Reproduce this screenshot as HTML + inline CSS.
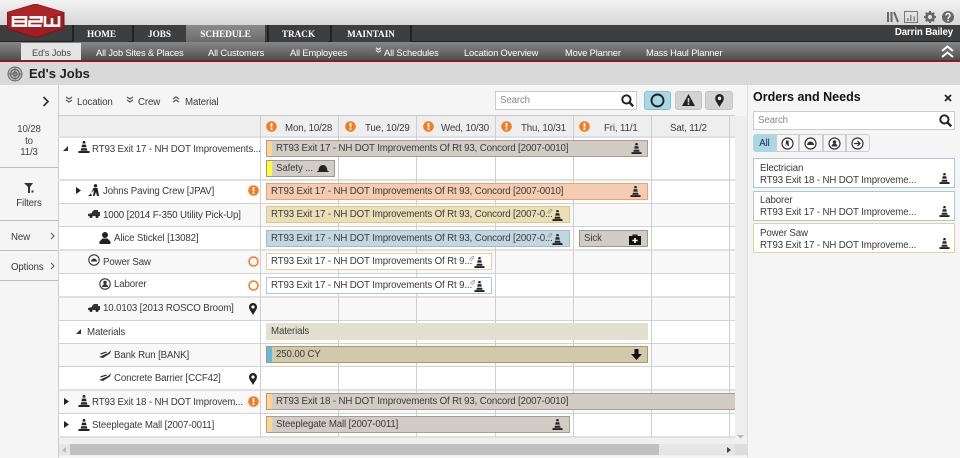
<!DOCTYPE html>
<html><head><meta charset="utf-8">
<style>
html,body{margin:0;padding:0}
body{width:960px;height:458px;overflow:hidden;position:relative;background:#f5f5f5;font-family:"Liberation Sans",sans-serif;font-size:9.7px;letter-spacing:-.13px;color:#3a3a3a}
.a,.t,.b,.l,.h{position:absolute}
.t{white-space:nowrap;line-height:14px;margin-top:4px}
.nav{position:absolute;top:25px;height:17px;background:#3d3e40;border-left:2px solid #222;color:#fff;font-family:"Liberation Serif",serif;font-weight:bold;font-size:9.2px;line-height:18px;text-align:center;letter-spacing:0}
.sub{position:absolute;top:44px;height:17px;line-height:18px;color:#fff;white-space:nowrap;font-size:9.3px}
.b{box-sizing:border-box;height:17px;line-height:15px;padding-left:4px;white-space:nowrap;overflow:hidden;border:1px solid #a89d8e;background:#d2ccc6}
.b.s{padding-left:9px}
.b i{position:absolute;left:0;top:0;bottom:0;width:5px;background:#ffd58f}
.b svg{position:absolute}
.h{background:#e0e0e0;height:2px;left:58px;width:677px}
.h1{height:1px;background:#d2d2d2}
.v{position:absolute;width:1px;top:116px;height:321px;background:#cfcfcf}
.ic{position:absolute}
.sl{position:absolute;left:0;width:58px;height:1px;background:#bdbdbd}
.card{position:absolute;left:753px;width:202px;height:30px;box-sizing:border-box;background:#fff;border:1px solid #a9c8d4;padding:3px 6px;line-height:12px}
.card svg{position:absolute;right:4px;bottom:3px}
.fb{position:absolute;top:134px;height:18px;box-sizing:border-box;border:1px solid #ccc;background:#f5f5f5}
</style></head><body>
<svg width="0" height="0" style="position:absolute">
<defs>
<symbol id="cone" viewBox="0 0 12 12"><path d="M5 0h2l.6 2.500H4.400zM4.100 3.600h3.800l.6 2.600H3.500zM3.200 7.300h5.600l.6 2.300H2.600zM.5 10h11v2H.5z" fill="#222"/></symbol>
<symbol id="alert" viewBox="0 0 11 11"><circle cx="5.500" cy="5.500" r="5.300" fill="#f47b20"/><rect x="4.600" y="2" width="1.800" height="4.400" fill="#fff"/><rect x="4.600" y="7.200" width="1.800" height="1.800" fill="#fff"/></symbol>
<symbol id="ring" viewBox="0 0 11 11"><circle cx="5.500" cy="5.500" r="4.500" fill="none" stroke="#f47b20" stroke-width="1.500"/></symbol>
<symbol id="pin" viewBox="0 0 8 12"><path d="M4 0a4 4 0 0 1 4 4c0 2.500-2.500 5-4 8C2.500 9 0 6.500 0 4a4 4 0 0 1 4-4z" fill="#222"/><circle cx="4" cy="4" r="1.600" fill="#fff"/></symbol>
<symbol id="truck" viewBox="0 0 12 8"><path d="M0 4l4-1V2l2-2h4v2h2v4H0z" fill="#333"/><circle cx="3" cy="6.500" r="1.500" fill="#222"/><circle cx="9" cy="6.500" r="1.500" fill="#222"/></symbol>
<symbol id="person" viewBox="0 0 12 12"><circle cx="6" cy="3" r="3" fill="#222"/><path d="M.5 12V9.500L3.500 6.500h5l3 3V12z" fill="#222"/></symbol>
<symbol id="mat" viewBox="0 0 12 8"><path d="M0 7l9-4 3-3-1 3.500L4 8zM1 3.500l6-2 1 1-6 2z" fill="#333"/></symbol>
<symbol id="crew" viewBox="0 0 12 12"><circle cx="7.500" cy="1.800" r="1.700" fill="#222"/><path d="M5.500 4h4l1.500 8H9L8 8 6.500 12H5l1-6-3 3z" fill="#222"/><path d="M0 12l3-2.500L4 12z" fill="#222"/></symbol>
<symbol id="ch" viewBox="0 0 8 7"><path d="M1 1l3 2 3-2M1 4l3 2 3-2" fill="none" stroke="#555" stroke-width="1.200"/></symbol>
<symbol id="chu" viewBox="0 0 8 7"><path d="M1 3l3-2 3 2M1 6l3-2 3 2" fill="none" stroke="#555" stroke-width="1.200"/></symbol>
<symbol id="search" viewBox="0 0 12 12"><circle cx="5" cy="5" r="3.800" fill="none" stroke="#222" stroke-width="1.800"/><path d="M8 8l3.300 3.300" stroke="#222" stroke-width="2.200"/></symbol>
<symbol id="clip" viewBox="0 0 8 8"><path d="M1.500 5.500L5 1.800a1 1 0 0 1 1.500 1.400L3 7" fill="none" stroke="#999" stroke-width=".9"/></symbol>
</defs></svg>

<!-- header -->
<div class="a" style="left:0;top:0;width:960px;height:25px;background:linear-gradient(#f3f3f3,#d6d6d6)"></div>
<div class="a" style="left:0;top:25px;width:960px;height:17px;background:#3d3e40;border-bottom:1px solid #222;box-sizing:border-box"></div>
<div class="nav" style="left:72px;width:55px">HOME</div>
<div class="nav" style="left:132px;width:51px">JOBS</div>
<div class="nav" style="left:186px;width:79px;background:linear-gradient(#8b8b8b,#6a6a6a);border:0;top:25px;height:18px">SCHEDULE</div>
<div class="nav" style="left:267px;width:59px">TRACK</div>
<div class="nav" style="left:330px;width:78px;border-right:2px solid #222">MAINTAIN</div>
<div class="t" style="right:7px;top:22px;color:#fff;font-weight:bold;font-size:9.7px">Darrin Bailey</div>
<div class="a" style="left:0;top:42px;width:960px;height:18px;background:linear-gradient(#878787,#4f4f4f)"></div>
<div class="a" style="left:0;top:60px;width:960px;height:2px;background:#8e1b20"></div>
<div class="a" style="left:21px;top:43px;width:60px;height:17px;background:#e4e4e4"></div>
<div class="sub" style="left:32px;color:#444">Ed's Jobs</div>
<div class="sub" style="left:96px">All Job Sites &amp; Places</div>
<div class="sub" style="left:208px">All Customers</div>
<div class="sub" style="left:290px">All Employees</div>
<svg class="ic" style="left:375px;top:47px" width="7" height="6" viewBox="0 0 8 7"><path d="M1 1l3 2 3-2M1 4l3 2 3-2" fill="none" stroke="#fff" stroke-width="1.200"/></svg>
<div class="sub" style="left:384px">All Schedules</div>
<div class="sub" style="left:464px">Location Overview</div>
<div class="sub" style="left:565px">Move Planner</div>
<div class="sub" style="left:646px">Mass Haul Planner</div>
<svg class="ic" style="left:941px;top:45px" width="13" height="13"><path d="M1 6l5.500-4.500L12 6M1 12l5.500-4.500L12 12" fill="none" stroke="#fff" stroke-width="2"/></svg>
<!-- logo -->
<svg class="ic" style="left:7px;top:4px" width="58" height="34" viewBox="0 0 58 34">
<path d="M0 8.500L28.500 0 57 8.500V24.500L28.500 33.500 0 24.500z" fill="#a31d20" stroke="#7d1417"/>
<path d="M0 8.500L28.500 0 57 8.500 28.500 17z" fill="#b8292b" opacity=".6"/>
<g fill="none" stroke="#fff" stroke-width="2.600"><path d="M6 13.300h13v8.400H6zM6 17.500h13"/><path d="M22.500 13.300h12v4.200h-12v4.200h12"/><path d="M38 12v9.700h14V12M45 21.700V14"/></g>
</svg>
<!-- header right icons -->
<svg class="ic" style="left:886px;top:11px" width="14" height="12"><path d="M1 1h2v10H1zM4.500 1h2v10h-2z" fill="#666"/><path d="M8 1l4 10" stroke="#666" stroke-width="2"/></svg>
<svg class="ic" style="left:904px;top:11px" width="14" height="12"><rect x=".5" y=".5" width="13" height="11" fill="none" stroke="#777"/><path d="M3 10V7h1.500v3zM6 10V4h1.500v6zM9.500 10V5.500H11V10z" fill="#888"/></svg>
<svg class="ic" style="left:924px;top:11px" width="12" height="12"><circle cx="6" cy="6" r="3.500" fill="none" stroke="#666" stroke-width="2.800"/><path d="M6 0v2M6 10v2M0 6h2M10 6h2M1.800 1.800l1.400 1.400M8.800 8.800l1.400 1.400M1.800 10.200l1.400-1.400M8.800 3.200l1.400-1.400" stroke="#666" stroke-width="2"/></svg>
<svg class="ic" style="left:942px;top:11px" width="12" height="12"><circle cx="6" cy="6" r="6" fill="#666"/><path d="M4 4.500a2 2 0 1 1 3 1.700c-.8.500-1 .8-1 1.800" fill="none" stroke="#fff" stroke-width="1.300"/><rect x="5.300" y="8.800" width="1.500" height="1.500" fill="#fff"/></svg>

<!-- title bar -->
<div class="a" style="left:0;top:62px;width:960px;height:23px;background:#d9d9d9"></div>
<svg class="ic" style="left:7px;top:66px" width="16" height="16"><circle cx="8" cy="8" r="7" fill="#bbb" stroke="#666"/><circle cx="8" cy="8" r="4.500" fill="none" stroke="#555"/><circle cx="8" cy="8" r="2" fill="none" stroke="#555"/><path d="M8 1v14M1 8h14" stroke="#666" stroke-width=".7"/></svg>
<div class="t" style="left:29px;top:62px;font-size:13px;font-weight:bold;line-height:16px;color:#222;letter-spacing:0">Ed's Jobs</div>

<!-- left sidebar -->
<div class="a" style="left:0;top:85px;width:58px;height:373px;background:#f5f5f5"></div>
<svg class="ic" style="left:42px;top:96px" width="8" height="11"><path d="M1.500 1l4.500 4.500L1.500 10" fill="none" stroke="#333" stroke-width="1.700"/></svg>
<div class="t" style="left:0;width:58px;text-align:center;top:120px;line-height:11.5px;white-space:normal;color:#444">10/28<br>to<br>11/3</div>
<div class="sl" style="top:167px"></div>
<svg class="ic" style="left:24px;top:183px" width="11" height="10"><path d="M0 0h9L6 4v6H4V4z" fill="#333"/><rect x="7.500" y="7.500" width="2" height="2" fill="#333"/></svg>
<div class="t" style="left:0;width:58px;text-align:center;top:193px">Filters</div>
<div class="sl" style="top:220px"></div>
<div class="t" style="left:11px;top:227px">New</div>
<svg class="ic" style="left:50px;top:232px" width="5" height="8"><path d="M1 1l3 3-3 3" fill="none" stroke="#555"/></svg>
<div class="sl" style="top:250px"></div>
<div class="t" style="left:11px;top:257px">Options</div>
<svg class="ic" style="left:50px;top:262px" width="5" height="8"><path d="M1 1l3 3-3 3" fill="none" stroke="#555"/></svg>
<div class="sl" style="top:280px"></div>

<!-- main column -->
<div class="a" style="left:58px;top:85px;width:689px;height:373px;background:#f5f5f5;border-left:1px solid #ccc;box-sizing:border-box"></div>
<svg class="ic" style="left:65px;top:96px" width="8" height="7"><use href="#ch"/></svg>
<div class="t" style="left:77px;top:92px">Location</div>
<svg class="ic" style="left:126px;top:96px" width="8" height="7"><use href="#ch"/></svg>
<div class="t" style="left:138px;top:92px">Crew</div>
<svg class="ic" style="left:172px;top:96px" width="8" height="7"><use href="#chu"/></svg>
<div class="t" style="left:185px;top:92px">Material</div>

<div class="a" style="left:495px;top:91px;width:142px;height:19px;box-sizing:border-box;background:#fff;border:1px solid #ccc;padding:2px 4px;line-height:13px;color:#888">Search</div>
<svg class="ic" style="left:621px;top:94px" width="13" height="13"><use href="#search"/></svg>
<div class="a" style="left:644px;top:91px;width:27px;height:19px;box-sizing:border-box;background:#a9d8e4;border:1px solid #7fc0d2;border-radius:3px"></div>
<svg class="ic" style="left:650px;top:93px" width="15" height="15"><circle cx="7.500" cy="7.500" r="6" fill="none" stroke="#222" stroke-width="1.900"/></svg>
<div class="a" style="left:675px;top:91px;width:27px;height:19px;box-sizing:border-box;background:#d3d3d3;border:1px solid #c4c4c4;border-radius:3px"></div>
<svg class="ic" style="left:682px;top:94px" width="13" height="12"><path d="M6.500 0L13 12H0z" fill="#222"/><rect x="5.700" y="4" width="1.600" height="4.500" fill="#d3d3d3"/><rect x="5.700" y="9.300" width="1.600" height="1.600" fill="#d3d3d3"/></svg>
<div class="a" style="left:705px;top:91px;width:28px;height:19px;box-sizing:border-box;background:#d3d3d3;border:1px solid #c4c4c4;border-radius:3px"></div>
<svg class="ic" style="left:715px;top:94px" width="9" height="13"><use href="#pin" width="9" height="13"/></svg>

<!-- grid -->
<div class="a" style="left:59px;top:116px;width:676px;height:21px;background:#eee"></div>
<div class="a" style="left:59px;top:137px;width:676px;height:300px;background:#fff"></div>
<div class="a" style="left:59px;top:203px;width:676px;height:23px;background:#f8f8f8"></div>
<div class="a" style="left:59px;top:250px;width:676px;height:23px;background:#f8f8f8"></div>
<div class="a" style="left:59px;top:297px;width:676px;height:23px;background:#f8f8f8"></div>
<div class="a" style="left:59px;top:343px;width:676px;height:23px;background:#f8f8f8"></div>
<div class="a" style="left:59px;top:390px;width:676px;height:23px;background:#f8f8f8"></div>
<div class="h h1" style="top:115px;background:#ccc"></div>
<div class="h" style="top:136px"></div>
<div class="h" style="top:179px"></div>
<div class="h h1" style="top:203px"></div>
<div class="h h1" style="top:226px"></div>
<div class="h" style="top:249px"></div>
<div class="h h1" style="top:273px"></div>
<div class="h" style="top:296px"></div>
<div class="h h1" style="top:320px"></div>
<div class="h h1" style="top:343px"></div>
<div class="h h1" style="top:366px"></div>
<div class="h" style="top:389px"></div>
<div class="h h1" style="top:413px"></div>
<div class="h" style="top:436px"></div>
<div class="v" style="left:260px"></div><div class="v" style="left:338px"></div><div class="v" style="left:416px"></div><div class="v" style="left:495px"></div><div class="v" style="left:573px"></div><div class="v" style="left:651px"></div><div class="v" style="left:729px"></div>

<!-- date headers -->
<svg class="ic" style="left:266px;top:121px" width="11" height="11"><use href="#alert"/></svg><div class="t" style="left:285px;top:118px">Mon, 10/28</div>
<svg class="ic" style="left:345px;top:121px" width="11" height="11"><use href="#alert"/></svg><div class="t" style="left:365px;top:118px">Tue, 10/29</div>
<svg class="ic" style="left:423px;top:121px" width="11" height="11"><use href="#alert"/></svg><div class="t" style="left:441px;top:118px">Wed, 10/30</div>
<svg class="ic" style="left:501px;top:121px" width="11" height="11"><use href="#alert"/></svg><div class="t" style="left:521px;top:118px">Thu, 10/31</div>
<svg class="ic" style="left:579px;top:121px" width="11" height="11"><use href="#alert"/></svg><div class="t" style="left:604px;top:118px">Fri, 11/1</div>
<div class="t" style="left:670px;top:118px">Sat, 11/2</div>

<!-- tree -->
<svg class="ic" style="left:63px;top:146px" width="5" height="5"><path d="M5 0v5H0z" fill="#333"/></svg>
<svg class="ic" style="left:78px;top:141px" width="12" height="12"><use href="#cone"/></svg>
<div class="t" style="left:92px;top:139px">RT93 Exit 17 - NH DOT Improvements...</div>
<svg class="ic" style="left:76px;top:187px" width="5" height="7"><path d="M0 0l5 3.500L0 7z" fill="#222"/></svg>
<svg class="ic" style="left:88px;top:184px" width="12" height="12"><use href="#crew"/></svg>
<div class="t" style="left:103px;top:181px">Johns Paving Crew [JPAV]</div>
<svg class="ic" style="left:248px;top:185px" width="11" height="11"><use href="#alert"/></svg>
<svg class="ic" style="left:88px;top:210px" width="12" height="8"><use href="#truck"/></svg>
<div class="t" style="left:103px;top:205px">1000 [2014 F-350 Utility Pick-Up]</div>
<svg class="ic" style="left:99px;top:232px" width="12" height="12"><use href="#person"/></svg>
<div class="t" style="left:114px;top:228px">Alice Stickel [13082]</div>
<svg class="ic" style="left:88px;top:254px" width="12" height="12"><circle cx="6" cy="6" r="5.200" fill="#fff" stroke="#333" stroke-width="1.100"/><path d="M3 7.500a3 3 0 0 1 6 0z" fill="#333"/></svg>
<div class="t" style="left:103px;top:252px">Power Saw</div>
<svg class="ic" style="left:248px;top:256px" width="11" height="11"><use href="#ring"/></svg>
<svg class="ic" style="left:99px;top:278px" width="12" height="12"><circle cx="6" cy="6" r="5.200" fill="#fff" stroke="#333" stroke-width="1.100"/><circle cx="6" cy="4.500" r="1.700" fill="#333"/><path d="M3 9a3 3 0 0 1 6 0z" fill="#333"/></svg>
<div class="t" style="left:114px;top:274px">Laborer</div>
<svg class="ic" style="left:248px;top:280px" width="11" height="11"><use href="#ring"/></svg>
<svg class="ic" style="left:88px;top:304px" width="12" height="8"><use href="#truck"/></svg>
<div class="t" style="left:103px;top:298px">10.0103 [2013 ROSCO Broom]</div>
<svg class="ic" style="left:249px;top:303px" width="8" height="12"><use href="#pin"/></svg>
<svg class="ic" style="left:76px;top:329px" width="5" height="5"><path d="M5 0v5H0z" fill="#333"/></svg>
<div class="t" style="left:87px;top:322px">Materials</div>
<svg class="ic" style="left:99px;top:350px" width="12" height="8"><use href="#mat"/></svg>
<div class="t" style="left:114px;top:345px">Bank Run [BANK]</div>
<svg class="ic" style="left:99px;top:373px" width="12" height="8"><use href="#mat"/></svg>
<div class="t" style="left:114px;top:368px">Concrete Barrier [CCF42]</div>
<svg class="ic" style="left:249px;top:373px" width="8" height="12"><use href="#pin"/></svg>
<svg class="ic" style="left:64px;top:398px" width="5" height="7"><path d="M0 0l5 3.500L0 7z" fill="#222"/></svg>
<svg class="ic" style="left:78px;top:395px" width="12" height="12"><use href="#cone"/></svg>
<div class="t" style="left:92px;top:392px">RT93 Exit 18 - NH DOT Improvem...</div>
<svg class="ic" style="left:248px;top:396px" width="11" height="11"><use href="#alert"/></svg>
<svg class="ic" style="left:64px;top:421px" width="5" height="7"><path d="M0 0l5 3.500L0 7z" fill="#222"/></svg>
<svg class="ic" style="left:78px;top:419px" width="12" height="12"><use href="#cone"/></svg>
<div class="t" style="left:92px;top:415px">Steeplegate Mall [2007-0011]</div>

<!-- bars -->
<div class="b s" style="left:266px;top:140px;width:382px"><i></i>RT93 Exit 17 - NH DOT Improvements Of Rt 93, Concord [2007-0010]<svg style="left:364px;top:2px" width="11" height="11"><use href="#cone"/></svg></div>
<div class="b s" style="left:266px;top:160px;width:69px;border-color:#999"><i style="background:#ffff2e"></i>Safety ...<svg style="left:50px;top:3px" width="12" height="9"><path d="M0 8c0-1 1-1 1.500-1 0-4 2-6 4.500-6s4 2 4.500 6c.8 0 1.500.5 1.500 1z" fill="#222"/></svg></div>
<div class="b" style="left:266px;top:183px;width:382px;background:#f4ccb2;border-color:#f0a06c">RT93 Exit 17 - NH DOT Improvements Of Rt 93, Concord [2007-0010]<svg style="left:363px;top:2px" width="11" height="11"><use href="#cone"/></svg></div>
<div class="b" style="left:266px;top:206px;width:304px;background:#ecdfb8;border-color:#dcc98e">RT93 Exit 17 - NH DOT Improvements Of Rt 93, Concord [2007-0...<svg style="left:279px;top:1px" width="7" height="7"><use href="#clip"/></svg><svg style="left:285px;top:3px" width="11" height="11"><use href="#cone"/></svg></div>
<div class="b" style="left:266px;top:230px;width:304px;background:#c3d7e0;border-color:#9cbdcb">RT93 Exit 17 - NH DOT Improvements Of Rt 93, Concord [2007-0...<svg style="left:279px;top:1px" width="7" height="7"><use href="#clip"/></svg><svg style="left:285px;top:3px" width="11" height="11"><use href="#cone"/></svg></div>
<div class="b" style="left:579px;top:230px;width:69px;border-color:#999">Sick<svg style="left:49px;top:2px" width="12" height="12"><path d="M0 3h3.500V1.500h5V3H12v9H0zM4.800 2.700V3h2.400v-.3z" fill="#111"/><path d="M5.200 5h1.600v1.800h1.800v1.500H6.800V10H5.200V8.300H3.400V6.800h1.800z" fill="#fff"/></svg></div>
<div class="b" style="left:266px;top:253px;width:226px;background:#fff;border-color:#e3d19d">RT93 Exit 17 - NH DOT Improvements Of Rt 9...<svg style="left:201px;top:1px" width="7" height="7"><use href="#clip"/></svg><svg style="left:207px;top:3px" width="11" height="11"><use href="#cone"/></svg></div>
<div class="b" style="left:266px;top:277px;width:226px;background:#fff;border-color:#a7cbd6">RT93 Exit 17 - NH DOT Improvements Of Rt 9...<svg style="left:202px;top:1px" width="7" height="7"><use href="#clip"/></svg><svg style="left:207px;top:3px" width="11" height="11"><use href="#cone"/></svg></div>
<div class="b" style="left:266px;top:323px;width:382px;background:#e3e0cf;border-color:#e3e0cf">Materials</div>
<div class="b s" style="left:266px;top:346px;width:382px;background:#d1c9ac;border-color:#a99b66"><i style="background:#62b8e0"></i>250.00 CY<svg style="left:364px;top:2px" width="11" height="11"><path d="M3.500 0h4v5H11L5.500 11 0 5h3.500z" fill="#111"/></svg></div>
<div class="b s" style="left:266px;top:393px;width:469px;border-right:0"><i></i>RT93 Exit 18 - NH DOT Improvements Of Rt 93, Concord [2007-0010]</div>
<div class="b s" style="left:266px;top:416px;width:304px"><i></i>Steeplegate Mall [2007-0011]<svg style="left:285px;top:2px" width="11" height="11"><use href="#cone"/></svg></div>

<!-- scrollbars -->
<div class="a" style="left:735px;top:116px;width:12px;height:321px;background:#eee"></div>
<svg class="ic" style="left:737px;top:435px" width="7" height="5"><path d="M0 0h7L3.500 4z" fill="#bbb"/></svg>
<div class="a" style="left:59px;top:438px;width:688px;height:18px;background:#f0f0f0"></div>
<div class="a" style="left:59px;top:444px;width:676px;height:11px;background:#e6e6e6"></div>
<div class="a" style="left:70px;top:444px;width:589px;height:11px;background:#c0c0c0"></div>
<svg class="ic" style="left:62px;top:447px" width="4" height="6"><path d="M4 0v6L0 3z" fill="#bbb"/></svg>
<svg class="ic" style="left:727px;top:447px" width="4" height="6"><path d="M0 0v6l4-3z" fill="#444"/></svg>
<div class="a" style="left:735px;top:444px;width:12px;height:11px;background:#ddd"></div>

<!-- orders panel -->
<div class="a" style="left:747px;top:85px;width:213px;height:373px;background:#f5f5f5;border-left:1px solid #ddd;box-sizing:border-box"></div>
<div class="t" style="left:753px;top:85px;font-weight:bold;font-size:12.5px;color:#111;line-height:16px;letter-spacing:0">Orders and Needs</div>
<svg class="ic" style="left:944px;top:94px" width="8" height="8"><path d="M1 1l6 6M7 1L1 7" stroke="#222" stroke-width="1.800"/></svg>
<div class="a" style="left:753px;top:111px;width:202px;height:19px;box-sizing:border-box;background:#fff;border:1px solid #ccc;padding:2px 4px;line-height:13px;color:#888">Search</div>
<svg class="ic" style="left:939px;top:114px" width="13" height="13"><use href="#search"/></svg>
<div class="fb" style="left:753px;width:23px;background:#a9d8e4;border-color:#a9d8e4;border-radius:3px 0 0 3px;text-align:center;line-height:17px;color:#224">All</div>
<div class="fb" style="left:776px;width:23px"></div>
<div class="fb" style="left:799px;width:24px"></div>
<div class="fb" style="left:823px;width:23px"></div>
<div class="fb" style="left:846px;width:24px;border-radius:0 3px 3px 0"></div>
<svg class="ic" style="left:781px;top:137px" width="13" height="13"><circle cx="6.500" cy="6.500" r="5.500" fill="#fff" stroke="#333" stroke-width="1.200"/><path d="M5 3.500h2.500L8 9H6.500L6 6.500 4.500 9z" fill="#333"/></svg>
<svg class="ic" style="left:804px;top:137px" width="13" height="13"><circle cx="6.500" cy="6.500" r="5.500" fill="#fff" stroke="#333" stroke-width="1.200"/><path d="M3 8a3.500 3.500 0 0 1 7 0z" fill="#333"/></svg>
<svg class="ic" style="left:828px;top:137px" width="13" height="13"><circle cx="6.500" cy="6.500" r="5.500" fill="#fff" stroke="#333" stroke-width="1.200"/><circle cx="6.500" cy="5" r="1.800" fill="#333"/><path d="M3.500 9.500a3 3 0 0 1 6 0z" fill="#333"/></svg>
<svg class="ic" style="left:851px;top:137px" width="13" height="13"><circle cx="6.500" cy="6.500" r="5.500" fill="#fff" stroke="#333" stroke-width="1.200"/><path d="M3 6.500h6M6.500 4l2.500 2.500L6.500 9" fill="none" stroke="#333" stroke-width="1.300"/></svg>
<div class="card" style="top:158px;padding-top:4px">Electrician<br>RT93 Exit 18 - NH DOT Improveme...<svg width="11" height="11"><use href="#cone"/></svg></div>
<div class="card" style="top:191px;padding-top:3px">Laborer<br>RT93 Exit 17 - NH DOT Improveme...<svg width="11" height="11"><use href="#cone"/></svg></div>
<div class="card" style="top:223px;border-color:#e3d19d;padding-top:4px">Power Saw<br>RT93 Exit 17 - NH DOT Improveme...<svg width="11" height="11"><use href="#cone"/></svg></div>
</body></html>
